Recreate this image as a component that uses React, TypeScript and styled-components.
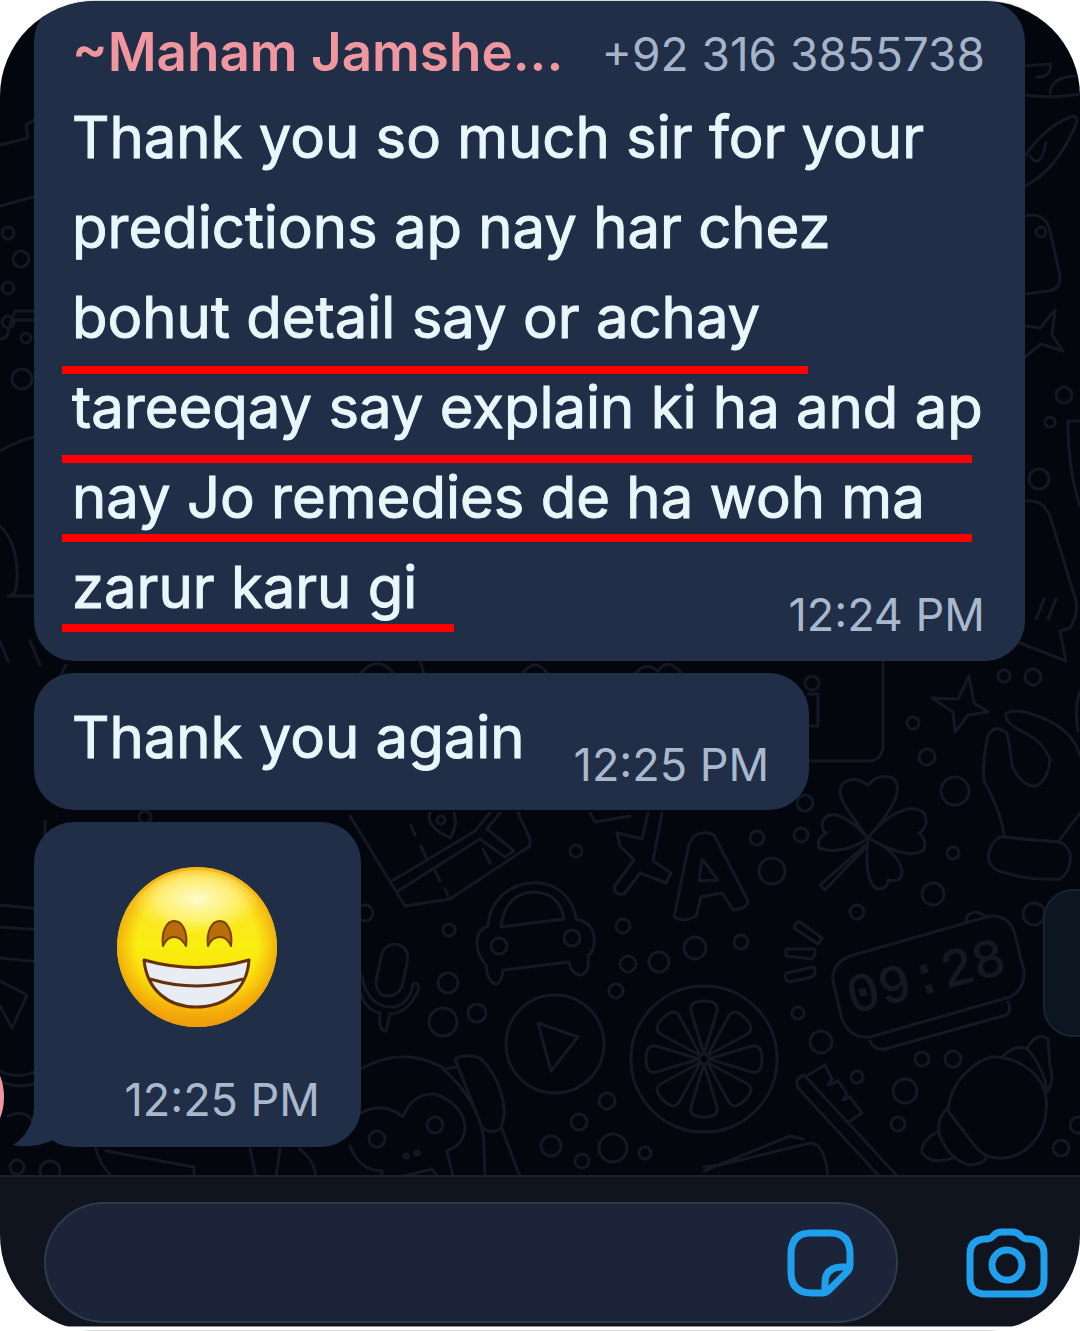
import React from "react";
import styled, { createGlobalStyle } from "styled-components";

const GlobalStyle = createGlobalStyle`
  * { box-sizing: border-box; }
  body { margin: 0; background: #ffffff; font-family: Inter, "Liberation Sans", sans-serif; }
  button { appearance: none; border: 0; padding: 0; background: none; cursor: pointer; display: block; }
`;

const Screen = styled.main`
  width: 100%;
  border-radius: 96px;
  overflow: hidden;
  border-top: 1px solid #d5dbdd;
  background: #ffffff;
`;

const Chat = styled.section`
  position: relative;
  overflow: hidden;
  padding: 0 55px 28px 34px;
  background: #04060e;
  border-bottom: 2px solid #1b202d;
`;

const WallpaperArt = styled.svg`
  position: absolute;
  inset: 0;
  width: 100%;
  height: 100%;
  fill: none;
  stroke: #151823;
  stroke-width: 3;
  stroke-linecap: round;
  stroke-linejoin: round;
`;

const ClockText = styled.text`
  font-family: "Liberation Mono", monospace;
  font-weight: 400;
  font-size: 54px;
  fill: #151823;
  stroke-width: 1;
`;

const Messages = styled.ol`
  position: relative;
  list-style: none;
  margin: 0;
  padding: 0;
  display: flex;
  flex-direction: column;
  align-items: flex-start;
  gap: 12px;
`;

const Bubble = styled.li<{ $pad: string; $wide?: boolean }>`
  position: relative;
  width: ${(p) => (p.$wide ? "100%" : "auto")};
  padding: ${(p) => p.$pad};
  border-radius: 40px;
  background: #202e47;
  color: #e9f7fb;
`;

const Sender = styled.header`
  display: flex;
  justify-content: space-between;
  align-items: baseline;
  height: 80px;
  line-height: 80px;
  white-space: nowrap;
`;

const Name = styled.strong`
  font-size: 53px;
  font-weight: 600;
  color: #f0969f;
`;

const Phone = styled.span`
  font-size: 46px;
  color: #a5b4c9;
`;

const Line = styled.span`
  display: block;
  position: relative;
  font-size: 58px;
  font-weight: 400;
  line-height: 90px;
  white-space: nowrap;
  -webkit-text-stroke: 1px #e9f7fb;
`;

const Mark = styled.i<{ $width: number; $top: number }>`
  position: absolute;
  left: -10px;
  top: ${(p) => p.$top}px;
  width: ${(p) => p.$width}px;
  height: 8px;
  background: #ff0000;
`;

const LastRow = styled.div`
  display: flex;
  justify-content: space-between;
  gap: 49px;
`;

const Time = styled.time`
  align-self: flex-end;
  margin-top: 48px;
  font-size: 45px;
  line-height: 50px;
  white-space: nowrap;
  color: #a9b8cc;
`;

const EmojiBody = styled.div`
  display: flex;
  flex-direction: column;
  align-items: flex-start;
  min-width: 203px;
`;

const Tail = styled.svg`
  position: absolute;
  left: -21px;
  bottom: 0;
`;

const Avatar = styled.span`
  position: absolute;
  left: -116px;
  bottom: 18px;
  width: 120px;
  height: 120px;
  border-radius: 50%;
  background: #f0969f;
`;

const ScrollButton = styled.button`
  && {
    position: absolute;
    right: -40px;
    bottom: 138px;
    width: 77px;
    height: 148px;
    border: 2px solid #142434;
    border-radius: 30px;
    background: #0c1520;
  }
`;

const Composer = styled.form`
  display: flex;
  align-items: center;
  gap: 68px;
  padding: 25px 32px 3px 44px;
  background: #0f141e;
`;

const Field = styled.div`
  flex: 1;
  min-width: 0;
  display: flex;
  align-items: center;
  padding: 0 42px 0 48px;
  height: 121px;
  border: 2px solid #2b3b4b;
  border-radius: 61px;
  background: #1c2439;
`;

const Input = styled.input`
  flex: 1;
  min-width: 0;
  height: 90px;
  border: 0;
  outline: 0;
  padding: 0;
  background: transparent;
  color: #e9f7fb;
  font: 400 48px Inter, "Liberation Sans", sans-serif;
`;

const Footer = styled.div`
  height: 5px;
  border-top: 1px solid #8d9195;
  border-bottom: 1px solid #d9dbdb;
`;

const Icon = styled.svg`
  display: block;
  fill: none;
  stroke: #1f9fec;
  stroke-width: 7;
  stroke-linecap: round;
  stroke-linejoin: round;
`;

const bubbles: [number, number, number][] = [
  [8, 232, 6], [21, 258, 8], [8, 287, 6], [8, 321, 6], [26, 337, 5], [22, 378, 10],
  [1064, 394, 8], [1050, 421, 5], [1039, 478, 10], [1041, 231, 5],
  [812, 682, 7], [1004, 675, 6], [1033, 676, 8], [913, 722, 6], [927, 756, 8],
  [955, 790, 14], [805, 802, 8], [757, 837, 7], [801, 834, 7], [772, 870, 13],
  [953, 852, 6], [933, 893, 11], [857, 911, 7], [576, 850, 6], [449, 929, 6],
  [448, 982, 10], [443, 1021, 14], [477, 1012, 9], [623, 925, 7], [628, 963, 8],
  [659, 961, 10], [695, 947, 11], [741, 941, 7], [616, 990, 7], [798, 1012, 6],
  [821, 1041, 11], [922, 1058, 7], [953, 1058, 8], [857, 1076, 6], [905, 1090, 12],
  [898, 1123, 7], [607, 1100, 8], [579, 1121, 8], [551, 1145, 10], [613, 1147, 14],
  [582, 1160, 7], [645, 1152, 6], [17, 1166, 7], [50, 1170, 10], [1034, 913, 11],
  [1061, 1147, 8], [365, 912, 8], [145, 816, 6], [1078, 1124, 8],
];

const Wallpaper = () => (
  <WallpaperArt viewBox="0 0 1080 1174" preserveAspectRatio="xMidYMin slice" aria-hidden="true">
    {bubbles.map(([x, y, r]) => (
      <circle key={`${x}-${y}`} cx={x} cy={y} r={r} />
    ))}
    {/* left edge */}
    <path d="M0 144L28 137L26 124L36 118M0 205L40 194M0 338Q8 338 8 330L15 310H40M15 319H40M0 450Q20 438 40 435M0 525Q16 540 17 570Q18 596 8 595H40M0 640L8 660M30 640L40 664" />
    <path d="M0 904L40 908M0 926L40 929M0 957L40 961M0 980L27 994L12 1027L0 1005M0 1070Q20 1080 40 1068M0 1080Q22 1090 40 1080M8 1115Q30 1105 36 1130M45 820V840M66 664Q50 690 70 700" />
    <path d="M96 1148Q100 1164 112 1176M106 1150L194 1166V1176M250 1148L256 1176M280 1148L276 1176M300 1148Q315 1160 316 1176" />
    {/* right edge */}
    <path d="M1025 65L1051 63Q1050 77 1037 76M1025 94Q1050 98 1080 93M1050 92Q1052 74 1080 75M1025 155Q1045 125 1073 115Q1080 115 1074 128Q1055 170 1025 185M1030 155Q1040 170 1046 142" />
    <path d="M1025 215Q1045 210 1050 230L1060 275Q1061 288 1048 290L1025 293M1025 325L1040 327L1055 309L1052 334L1063 350L1041 343L1025 356" />
    <path d="M1080 420H1068Q1068 470 1080 505M1025 500Q1043 498 1050 515L1076 600Q1078 615 1070 627L1060 630L1066 660L1020 642M1036 618L1044 598M1048 618L1056 598" />
    {/* photo, sparkle */}
    <path d="M883 655V745Q882 760 868 760H810M808 693H818V725H810M360 673Q378 652 394 673M420 660L424 673M522 673Q535 655 548 673M635 673Q645 660 658 670Q668 655 682 673" />
    <path d="M969 675L974 702L988 711L968 714L955 731L953 711L932 697L958 698Z" />
    {/* hand */}
    <path d="M1004 836Q1003 815 984 780Q982 760 988 735Q995 722 1007 732Q1010 745 1012 765Q1022 786 1036 785Q1048 780 1050 758Q1042 740 1027 733Q1003 722 1006 712Q1020 705 1053 722Q1075 735 1080 755M1004 836L1058 841L1080 812M1000 836Q990 842 988 856Q990 868 1002 871Q1030 880 1060 878Q1072 870 1070 852Q1065 841 1058 841ZM1080 690Q1074 705 1078 730" />
    {/* clover */}
    <path d="M868 837C852 815 830 790 845 781Q855 775 868 784Q878 772 893 777C907 790 885 817 868 837ZM868 837C850 817 830 806 823 820Q820 830 827 832Q816 837 819 847C835 853 855 847 868 837ZM868 837C885 815 910 800 924 812Q930 825 919 832Q928 840 923 850C905 858 885 845 868 837ZM868 837C865 865 868 885 878 888Q888 888 888 879Q902 882 902 871C900 855 885 845 868 837ZM866 844L820 884L825 889L868 844" />
    {/* map */}
    <path d="M350 815L405 905L450 898L530 845V838L518 812M392 880L475 830L490 812M398 890L480 838L505 856L514 850L487 828L500 812M411 824L415 834M421 845L426 857M434 868L440 880M445 888L448 895M483 848L490 862M430 812Q425 825 450 837Q458 825 454 812" />
    <circle cx="441" cy="819" r="4" />
    {/* letters */}
    <path d="M590 812L595 821L630 815M648 812L642 838L617 832L620 845L634 859L614 886Q615 895 624 893L640 872L666 882L671 872L653 860L662 812" />
    <path d="M694 835Q704 829 714 834L748 900Q747 908 733 909L722 892L701 896L696 915Q684 922 674 916L689 843ZM702 858L718 879L699 880Z" />
    {/* car */}
    <path d="M488 925C490 895 515 880 540 882C560 884 574 900 576 918Q596 922 594 943Q592 954 588 954Q590 972 581 974Q571 973 569 961L503 969Q502 982 496 983Q487 981 486 964Q474 950 478 935Q480 928 488 925ZM501 926Q505 892 534 891Q560 892 564 918Z" />
    <circle cx="499" cy="945" r="8" />
    <circle cx="572" cy="937" r="8" />
    {/* microphone */}
    <path d="M382 952Q387 941 400 944Q410 950 407 962L402 986Q395 998 382 994Q374 988 377 975ZM362 975Q368 1008 395 1006Q410 1002 413 983Q420 980 418 990Q408 1012 390 1013L386 1030Q378 1030 380 1012Q364 1008 360 990" />
    {/* play, citrus */}
    <circle cx="555" cy="1043" r="49" />
    <path d="M538 1022L578 1036L551 1070Z" />
    <circle cx="704" cy="1058" r="73" />
    <circle cx="704" cy="1058" r="5" />
    {[0, 45, 90, 135, 180, 225, 270, 315].map((a) => (
      <path key={a} transform={`rotate(${a} 704 1058)`} d="M704 1053L691 1010Q689 1000 704 1000Q719 1000 717 1010Z" />
    ))}
    {/* emphasis strokes */}
    <path d="M800 921L822 937L818 943L794 927Q795 920 800 921ZM786 948H814Q817 952 812 958L786 955ZM786 972L814 966Q817 973 812 976L789 981Q784 978 786 972Z" />
    {/* digital clock */}
    <path d="M850 955L990 915Q1008 914 1014 930L1024 970Q1025 988 1010 996L870 1036Q850 1038 842 1018L833 980Q832 962 850 955ZM870 1040Q875 1050 885 1048L1006 1014Q1012 1010 1008 1001M966 920Q966 912 976 911L984 914" />
    <g transform="rotate(-15 855 1012)">
      <ClockText x="852" y="1012">09:28</ClockText>
    </g>
    {/* toothbrush */}
    <path d="M880 1176L798 1087Q794 1078 804 1074L898 1176M808 1074L825 1064L832 1078L828 1084L838 1080L847 1093L843 1099L850 1096L862 1112L850 1120M704 1170L790 1135L803 1138M704 1166L720 1164L810 1142Q825 1142 828 1176" />
    {/* croissant */}
    <path d="M948 1110C950 1080 975 1060 992 1056C1020 1056 1050 1075 1046 1110C1045 1135 1025 1155 1005 1157Q985 1159 975 1145ZM948 1106Q935 1120 940 1135Q950 1160 970 1164Q985 1163 987 1155M939 1130Q920 1140 922 1152Q932 1165 955 1156M1003 1055Q1020 1040 1030 1051Q1045 1070 1047 1091Q1055 1080 1050 1065M1028 1046Q1038 1030 1048 1038L1050 1065" />
    {/* sloth */}
    <path d="M361 1068Q400 1045 440 1065Q480 1100 484 1140L485 1176M455 1058Q465 1052 480 1057C500 1075 510 1110 500 1128Q490 1134 482 1126ZM444 1068L456 1066M502 1128L520 1176M360 1112Q385 1100 403 1116Q412 1092 435 1093C470 1105 475 1140 447 1150L453 1176M350 1145Q360 1170 382 1170V1176M400 1176L432 1168L438 1176" />
    <circle cx="377" cy="1138" r="8" />
    <circle cx="435" cy="1124" r="8" />
    <circle cx="406" cy="1155" r="2" />
    <circle cx="417" cy="1152" r="2" />
  </WallpaperArt>
);

const GrinningFace = () => (
  <svg width="160" height="160" viewBox="0 0 160 160" role="img" aria-label="Beaming face">
    <defs>
      <linearGradient id="face" x1="0" y1="0" x2="0" y2="1">
        <stop offset="0" stopColor="#fdd735" />
        <stop offset="0.5" stopColor="#f8ef10" />
        <stop offset="0.75" stopColor="#fbdc0b" />
        <stop offset="1" stopColor="#f2a00d" />
      </linearGradient>
      <radialGradient id="rim" cx="0.5" cy="0.48" r="0.52">
        <stop offset="0.72" stopColor="#f7a908" stopOpacity="0" />
        <stop offset="1" stopColor="#ee9c0a" stopOpacity="0.9" />
      </radialGradient>
      <radialGradient id="shine">
        <stop offset="0" stopColor="#fffde0" stopOpacity="0.9" />
        <stop offset="0.6" stopColor="#fffaa0" stopOpacity="0.6" />
        <stop offset="1" stopColor="#fff65a" stopOpacity="0" />
      </radialGradient>
      <clipPath id="disc">
        <circle cx="80" cy="80" r="77" />
      </clipPath>
    </defs>
    <circle cx="80" cy="80" r="80" fill="url(#face)" />
    <circle cx="80" cy="80" r="80" fill="url(#rim)" />
    <ellipse cx="80" cy="32" rx="66" ry="36" fill="url(#shine)" clipPath="url(#disc)" />
    <g fill="#b86c0a" stroke="#7a3f08" strokeWidth="2" strokeLinejoin="round">
      <path d="M46 79C44 64 50 54 57 54C65 54 71 64 69 79Q64 70 57 70Q50 70 46 79Z" />
      <path d="M91 79C89 64 95 54 103 54C110 54 116 64 114 79Q110 70 103 70Q95 70 91 79Z" />
    </g>
    <path d="M27 93Q80 108 132 93C130 123 108 140 79 140C51 140 30 123 27 93Z" fill="#e8ecf3" stroke="#65300c" strokeWidth="3" strokeLinejoin="round" />
    <path d="M33 112Q80 126 126 112" fill="none" stroke="#65300c" strokeWidth="3" />
  </svg>
);

const App = () => (
  <>
    <GlobalStyle />
    <Screen>
      <Chat>
        <Wallpaper />
        <ScrollButton type="button" aria-label="Scroll to latest" />
        <Avatar />
        <Messages>
          <Bubble $wide $pad="11px 40px 21px 38px">
            <Sender>
              <Name>~Maham Jamshe...</Name>
              <Phone>+92 316 3855738</Phone>
            </Sender>
            <Line>Thank you so much sir for your</Line>
            <Line>predictions ap nay har chez</Line>
            <Line>bohut detail say or achay<Mark $width={746} $top={94} /></Line>
            <Line>tareeqay say explain ki ha and ap<Mark $width={910} $top={93} /></Line>
            <Line>nay Jo remedies de ha woh ma<Mark $width={910} $top={82} /></Line>
            <LastRow>
              <Line>zarur karu gi<Mark $width={392} $top={82} /></Line>
              <Time>12:24 PM</Time>
            </LastRow>
          </Bubble>
          <Bubble $pad="19px 40px 20px 38px">
            <LastRow>
              <Line>Thank you again</Line>
              <Time>12:25 PM</Time>
            </LastRow>
          </Bubble>
          <Bubble $pad="45px 41px 22px 83px">
            <Tail width="70" height="70" viewBox="0 0 70 70" aria-hidden="true">
              <path d="M21 0V30Q20 55 0 68Q20 72 40 63L70 70V0Z" fill="#202e47" />
            </Tail>
            <EmojiBody>
              <GrinningFace />
              <Time>12:25 PM</Time>
            </EmojiBody>
          </Bubble>
        </Messages>
      </Chat>
      <Composer onSubmit={(e) => e.preventDefault()}>
        <Field>
          <Input type="text" aria-label="Message" />
          <button type="button" aria-label="Stickers">
            <Icon width="67" height="68" viewBox="0 0 67 68">
              <path d="M24 4H43Q63 4 63 25V36Q63 40 60 43L42 61Q39 64 35 64H25Q4 64 4 43V25Q4 4 24 4Z" />
              <path d="M62 38H54Q38 39 38 54V63" />
            </Icon>
          </button>
        </Field>
        <button type="button" aria-label="Camera">
          <Icon width="82" height="70" viewBox="0 0 82 70">
            <path d="M19 11H21Q25 11 28 7Q31 4 36 4H46Q51 4 54 7Q57 11 61 11H63Q78 12 78 26V51Q78 66 63 66H19Q4 66 4 51V26Q4 12 19 11Z" />
            <circle cx="41" cy="37" r="15" />
          </Icon>
        </button>
      </Composer>
      <Footer />
    </Screen>
  </>
);

export default App;
